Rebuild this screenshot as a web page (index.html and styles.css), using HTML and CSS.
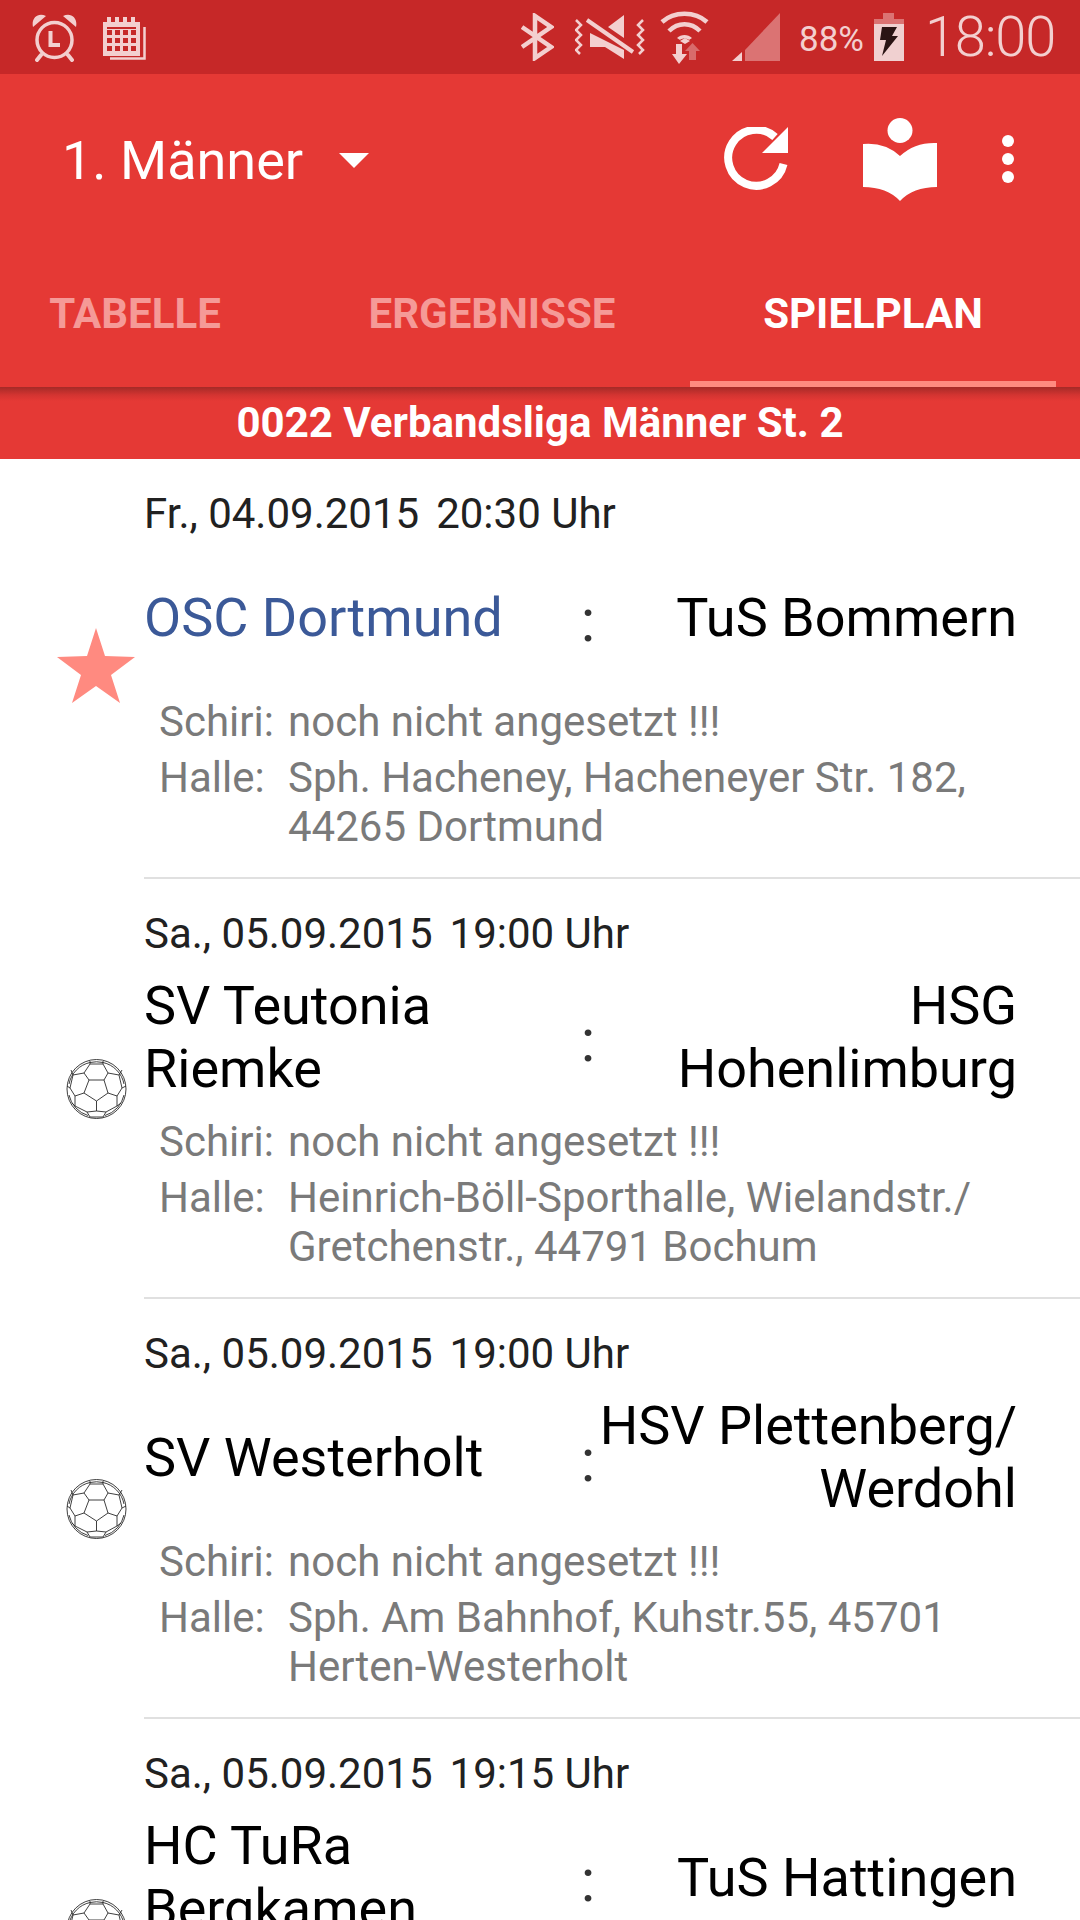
FILE: index.html
```html
<!DOCTYPE html>
<html lang="de">
<head>
    <meta charset="UTF-8">
    <meta name="viewport" content="width=device-width, initial-scale=1.0">
    <title>Spielplan</title>
    <link rel="stylesheet" href="styles.css">
</head>
<body>
    <svg class="defs" width="0" height="0">
        <symbol id="ball" viewBox="0 0 61 60">
            <g fill="none" stroke="#2a2a2a" stroke-width="0.9">
                <circle cx="30.500" cy="30" r="29.500"/>
                <path d="M3 25A27.500 27.500 0 0 1 24 3.500Q30.500 2 37 3.500A27.500 27.500 0 0 1 58 25M3 36A27.500 27.500 0 0 0 22 56.500M58 36A27.500 27.500 0 0 1 39 56.500"/>
                <path d="M23 21H38L42 34L30.500 42L18 34Z"/>
                <path d="M23 21L18 14L24 5H37L42 14L38 21"/>
                <path d="M24 5V2M37 5V2"/>
                <path d="M18 14L7 16L4 29L9 37L18 34M7 16L5 11M4 29L1 27"/>
                <path d="M42 14L53 16L56 29L51 37L42 34M53 16L56 11M56 29L60 27"/>
                <path d="M30.500 42V52M9 37V47L21 53L30.500 52L40 53L51 47V37"/>
                <path d="M21 53L24 58H37L40 53M9 47L6 44M51 47L55 44"/>
            </g>
        </symbol>
    </svg>

    <div class="status-bar">
        <div class="status-left">
            <svg class="ico-alarm" viewBox="0 0 45 49">
                <path d="M1 14C-1 5 6 -1 14 3ZM44 14C46 5 39 -1 31 3Z" fill="#f3cfcf"/>
                <circle cx="22.500" cy="27" r="17.500" fill="none" stroke="#f3cfcf" stroke-width="3.500"/>
                <path d="M18.500 18V32H28" fill="none" stroke="#f3cfcf" stroke-width="4"/>
                <path d="M9 42L5 47M36 42L40 47" stroke="#f3cfcf" stroke-width="4" stroke-linecap="round"/>
            </svg>
            <svg class="ico-cal" viewBox="0 0 44 43">
                <path d="M41.500 10V41.500H7" fill="none" stroke="#f3cfcf" stroke-width="2.500"/>
                <path d="M0 5H4V0H8V5H12V0H16V5H20V0H24V5H28V0H32V5H37V39H0Z" fill="#f3cfcf"/>
                <path d="M4 10H33V12H4Z" fill="#c62828"/>
                <path d="M4 13h5v5h-5zM12 13h5v5h-5zM20 13h5v5h-5zM28 13h5v5h-5zM4 21h5v5h-5zM12 21h5v5h-5zM20 21h5v5h-5zM28 21h5v5h-5zM4 29h5v5h-5zM12 29h5v5h-5zM20 29h5v5h-5zM28 29h5v5h-5z" fill="#c62828"/>
            </svg>
        </div>
        <div class="status-right">
            <svg class="ico-bt" viewBox="0 0 33 48">
                <path d="M1 14L30 34L14 45V3L30 14L1 34" fill="none" stroke="#f3cfcf" stroke-width="4.500"/>
            </svg>
            <svg class="ico-mute" viewBox="0 0 70 45">
                <path d="M1 5L6 10L1 15L6 20L1 25L6 30L1 35L5 39M68 5L63 10L68 15L63 20L68 25L63 30L68 35L64 39" fill="none" stroke="#f3cfcf" stroke-width="2.500"/>
                <path d="M33 12L49 0V23ZM15 18V32H30L49 44V35Z" fill="#f3cfcf"/>
                <path d="M12 5L58 37" stroke="#f3cfcf" stroke-width="4"/>
            </svg>
            <svg class="ico-wifi" viewBox="0 0 49 53">
                <path d="M2 11C14 0 35 0 47 11M9 20C18 11 31 11 40 20" fill="none" stroke="#f3cfcf" stroke-width="4.500"/>
                <path d="M17 27C21 23 28 23 32 27L29 29C27 27 22 27 20 29Z" fill="#f3cfcf"/>
                <path d="M20 30L25 27L30 30L25 33Z" fill="#f3cfcf"/>
                <path d="M16 33H22V43H27L19 53L12 43H16Z" fill="#f3cfcf"/>
                <path d="M29 49V40H25L32.500 32L40 40H36V49Z" fill="#f3cfcf" opacity="0.4"/>
            </svg>
            <svg class="ico-signal" viewBox="0 0 48 48">
                <path d="M13 48V37L48 0V48Z" fill="#f3cfcf" opacity="0.45"/>
                <path d="M0 48L10 39V48Z" fill="#f3cfcf"/>
            </svg>
            <span class="batt-pct">88%</span>
            <svg class="ico-batt" viewBox="0 0 30 48">
                <path d="M9 0H20V6H30V11H0V6H9Z" fill="#f3cfcf" opacity="0.45"/>
                <path d="M0 11H30V48H0Z" fill="#f0d0d0"/>
                <path d="M8 14H23L18 23H24L8 43L12 27H6Z" fill="#2a1414"/>
            </svg>
            <span class="clock">18:00</span>
        </div>
    </div>

    <header class="app-bar">
        <div class="toolbar">
            <div class="spinner">
                <span class="spinner-title">1. Männer</span>
                <span class="caret"></span>
            </div>
            <div class="actions">
                <svg class="ico-reload" viewBox="0 0 64 64">
                    <path d="M51 10A28 28 0 1 0 59.500 37" fill="none" stroke="#fff" stroke-width="8"/>
                    <path d="M64 0V26H38Z" fill="#fff"/>
                </svg>
                <svg class="ico-book" viewBox="0 0 74 83">
                    <circle cx="37" cy="12.500" r="12.500" fill="#fff"/>
                    <path d="M0 26Q22 24 37 38Q52 24 74 25V69Q50 69 37 83Q24 69 0 69Z" fill="#fff"/>
                </svg>
                <div class="overflow">
                    <span></span><span></span><span></span>
                </div>
            </div>
        </div>
        <nav class="tabs">
            <div class="tab tab-first">TABELLE</div>
            <div class="tab tab-second">ERGEBNISSE</div>
            <div class="tab tab-third active">SPIELPLAN</div>
        </nav>
    </header>

    <div class="league">0022 Verbandsliga Männer St. 2</div>

    <main class="games">
        <article class="game">
            <div class="game-icon">
                <svg class="star" viewBox="0 0 78 75"><path d="M39 0L48 28L78 29L54 47L63 75L39 58L15 75L24 47L0 29L30 28Z" fill="#ff8a80"/></svg>
            </div>
            <div class="game-body">
                <div class="game-date"><span>Fr., 04.09.2015</span><span>20:30 Uhr</span></div>
                <div class="teams">
                    <div class="team own">OSC Dortmund</div>
                    <div class="colon">:</div>
                    <div class="team away">TuS Bommern</div>
                </div>
                <div class="info">
                    <span>Schiri:</span><span>noch nicht angesetzt !!!</span>
                    <span>Halle:</span><span>Sph. Hacheney, Hacheneyer Str. 182, 44265 Dortmund</span>
                </div>
            </div>
        </article>
        <article class="game">
            <div class="game-icon"><svg class="ball"><use href="#ball"/></svg></div>
            <div class="game-body">
                <div class="game-date"><span>Sa., 05.09.2015</span><span>19:00 Uhr</span></div>
                <div class="teams">
                    <div class="team">SV Teutonia Riemke</div>
                    <div class="colon">:</div>
                    <div class="team away">HSG Hohenlimburg</div>
                </div>
                <div class="info">
                    <span>Schiri:</span><span>noch nicht angesetzt !!!</span>
                    <span>Halle:</span><span>Heinrich-Böll-Sporthalle, Wielandstr./ Gretchenstr., 44791 Bochum</span>
                </div>
            </div>
        </article>
        <article class="game">
            <div class="game-icon"><svg class="ball"><use href="#ball"/></svg></div>
            <div class="game-body">
                <div class="game-date"><span>Sa., 05.09.2015</span><span>19:00 Uhr</span></div>
                <div class="teams">
                    <div class="team">SV Westerholt</div>
                    <div class="colon">:</div>
                    <div class="team away">HSV Plettenberg/ Werdohl</div>
                </div>
                <div class="info">
                    <span>Schiri:</span><span>noch nicht angesetzt !!!</span>
                    <span>Halle:</span><span>Sph. Am Bahnhof, Kuhstr.55, 45701 Herten-Westerholt</span>
                </div>
            </div>
        </article>
        <article class="game">
            <div class="game-icon"><svg class="ball"><use href="#ball"/></svg></div>
            <div class="game-body">
                <div class="game-date"><span>Sa., 05.09.2015</span><span>19:15 Uhr</span></div>
                <div class="teams">
                    <div class="team">HC TuRa Bergkamen</div>
                    <div class="colon">:</div>
                    <div class="team away">TuS Hattingen</div>
                </div>
            </div>
        </article>
    </main>
</body>
</html>
```

FILE: styles.css
```css
html, body {
    margin: 0;
    padding: 0;
    height: 1920px;
    overflow: hidden;
    background: #ffffff;
    font-family: Roboto, "Noto Sans", sans-serif;
}
.defs { position: absolute; }
.status-bar {
    height: 74px;
    background: #c62828;
    display: flex;
    justify-content: space-between;
    align-items: center;
    padding: 0 25px 0 32px;
}
.status-left, .status-right {
    display: flex;
    align-items: center;
}
.ico-alarm { width: 45px; height: 49px; margin-top: 1px; }
.ico-cal { width: 44px; height: 43px; margin-left: 26px; margin-top: 3px; }
.ico-bt { width: 33px; height: 48px; }
.ico-mute { width: 70px; height: 45px; margin-left: 21px; }
.ico-wifi { width: 49px; height: 53px; margin-left: 15px; }
.ico-signal { width: 48px; height: 48px; margin-left: 23px; }
.ico-batt { width: 30px; height: 48px; margin-left: 10px; }
.batt-pct {
    color: #f3cfcf;
    font-size: 35px;
    margin-left: 19px;
    margin-top: 4px;
}
.clock {
    color: #f3cfcf;
    font-size: 56px;
    font-weight: 300;
    letter-spacing: -1.2px;
    margin-left: 21px;
}
.app-bar {
    background: #e53935;
    height: 313px;
}
.toolbar {
    height: 166px;
    display: flex;
    justify-content: space-between;
    align-items: center;
    padding: 0 66px 0 62px;
}
.spinner {
    display: flex;
    align-items: center;
    margin-top: 6px;
}
.spinner-title {
    color: #ffffff;
    font-size: 54px;
}
.caret {
    width: 0;
    height: 0;
    border-left: 15px solid transparent;
    border-right: 15px solid transparent;
    border-top: 15px solid #ffffff;
    margin-left: 36px;
}
.actions {
    display: flex;
    align-items: center;
    margin-top: 4px;
}
.ico-reload { width: 64px; height: 64px; }
.ico-book { width: 74px; height: 83px; margin-left: 75px; }
.overflow {
    display: flex;
    flex-direction: column;
    gap: 6px;
    margin-left: 65px;
}
.overflow span {
    width: 12px;
    height: 12px;
    border-radius: 50%;
    background: #ffffff;
}
.tabs {
    height: 147px;
    display: flex;
}
.tab {
    height: 147px;
    box-sizing: border-box;
    padding-top: 49px;
    text-align: center;
    font-size: 42px;
    font-weight: 700;
    color: #f59a97;
}
.tab-first { width: 270px; }
.tab-second { width: 396px; margin-left: 24px; }
.tab-third { width: 366px; }
.tab.active {
    color: #ffffff;
    border-bottom: 6px solid #ff8a80;
}
.league {
    height: 72px;
    line-height: 72px;
    background: linear-gradient(to bottom, #a52a27 0, #d33431 8px, #e53935 14px);
    color: #ffffff;
    text-align: center;
    font-size: 42px;
    font-weight: 700;
}
.game {
    height: 420px;
    display: flex;
    align-items: center;
}
.game-icon {
    width: 144px;
    flex: none;
    display: flex;
    padding-left: 66px;
    box-sizing: border-box;
}
.star { width: 78px; height: 75px; margin-left: -9px; margin-bottom: 8px; flex: none; }
.ball { width: 61px; height: 60px; flex: none; }
.game-body {
    flex: 1;
    height: 420px;
    box-sizing: border-box;
    border-bottom: 2px solid #e0e0e0;
    padding-top: 31px;
}
.game-date {
    display: flex;
    gap: 17px;
    font-size: 42px;
    line-height: 48px;
    color: #212121;
}
.teams {
    display: flex;
    align-items: center;
    height: 130px;
    margin-top: 14px;
    font-size: 54px;
    line-height: 63px;
    color: #000000;
}
.team { width: 431px; flex: none; }
.team.own { color: #3b5998; }
.team.away { width: 421px; margin-left: -5px; text-align: right; }
.colon {
    width: 26px;
    flex: none;
    text-align: center;
    font-size: 60px;
    color: #333333;
    margin-top: 7px;
}
.info {
    display: grid;
    grid-template-columns: 129px 1fr;
    row-gap: 7px;
    margin: 15px 64px 0 15px;
    font-size: 42px;
    line-height: 49px;
    color: #7a7a7a;
}
```
